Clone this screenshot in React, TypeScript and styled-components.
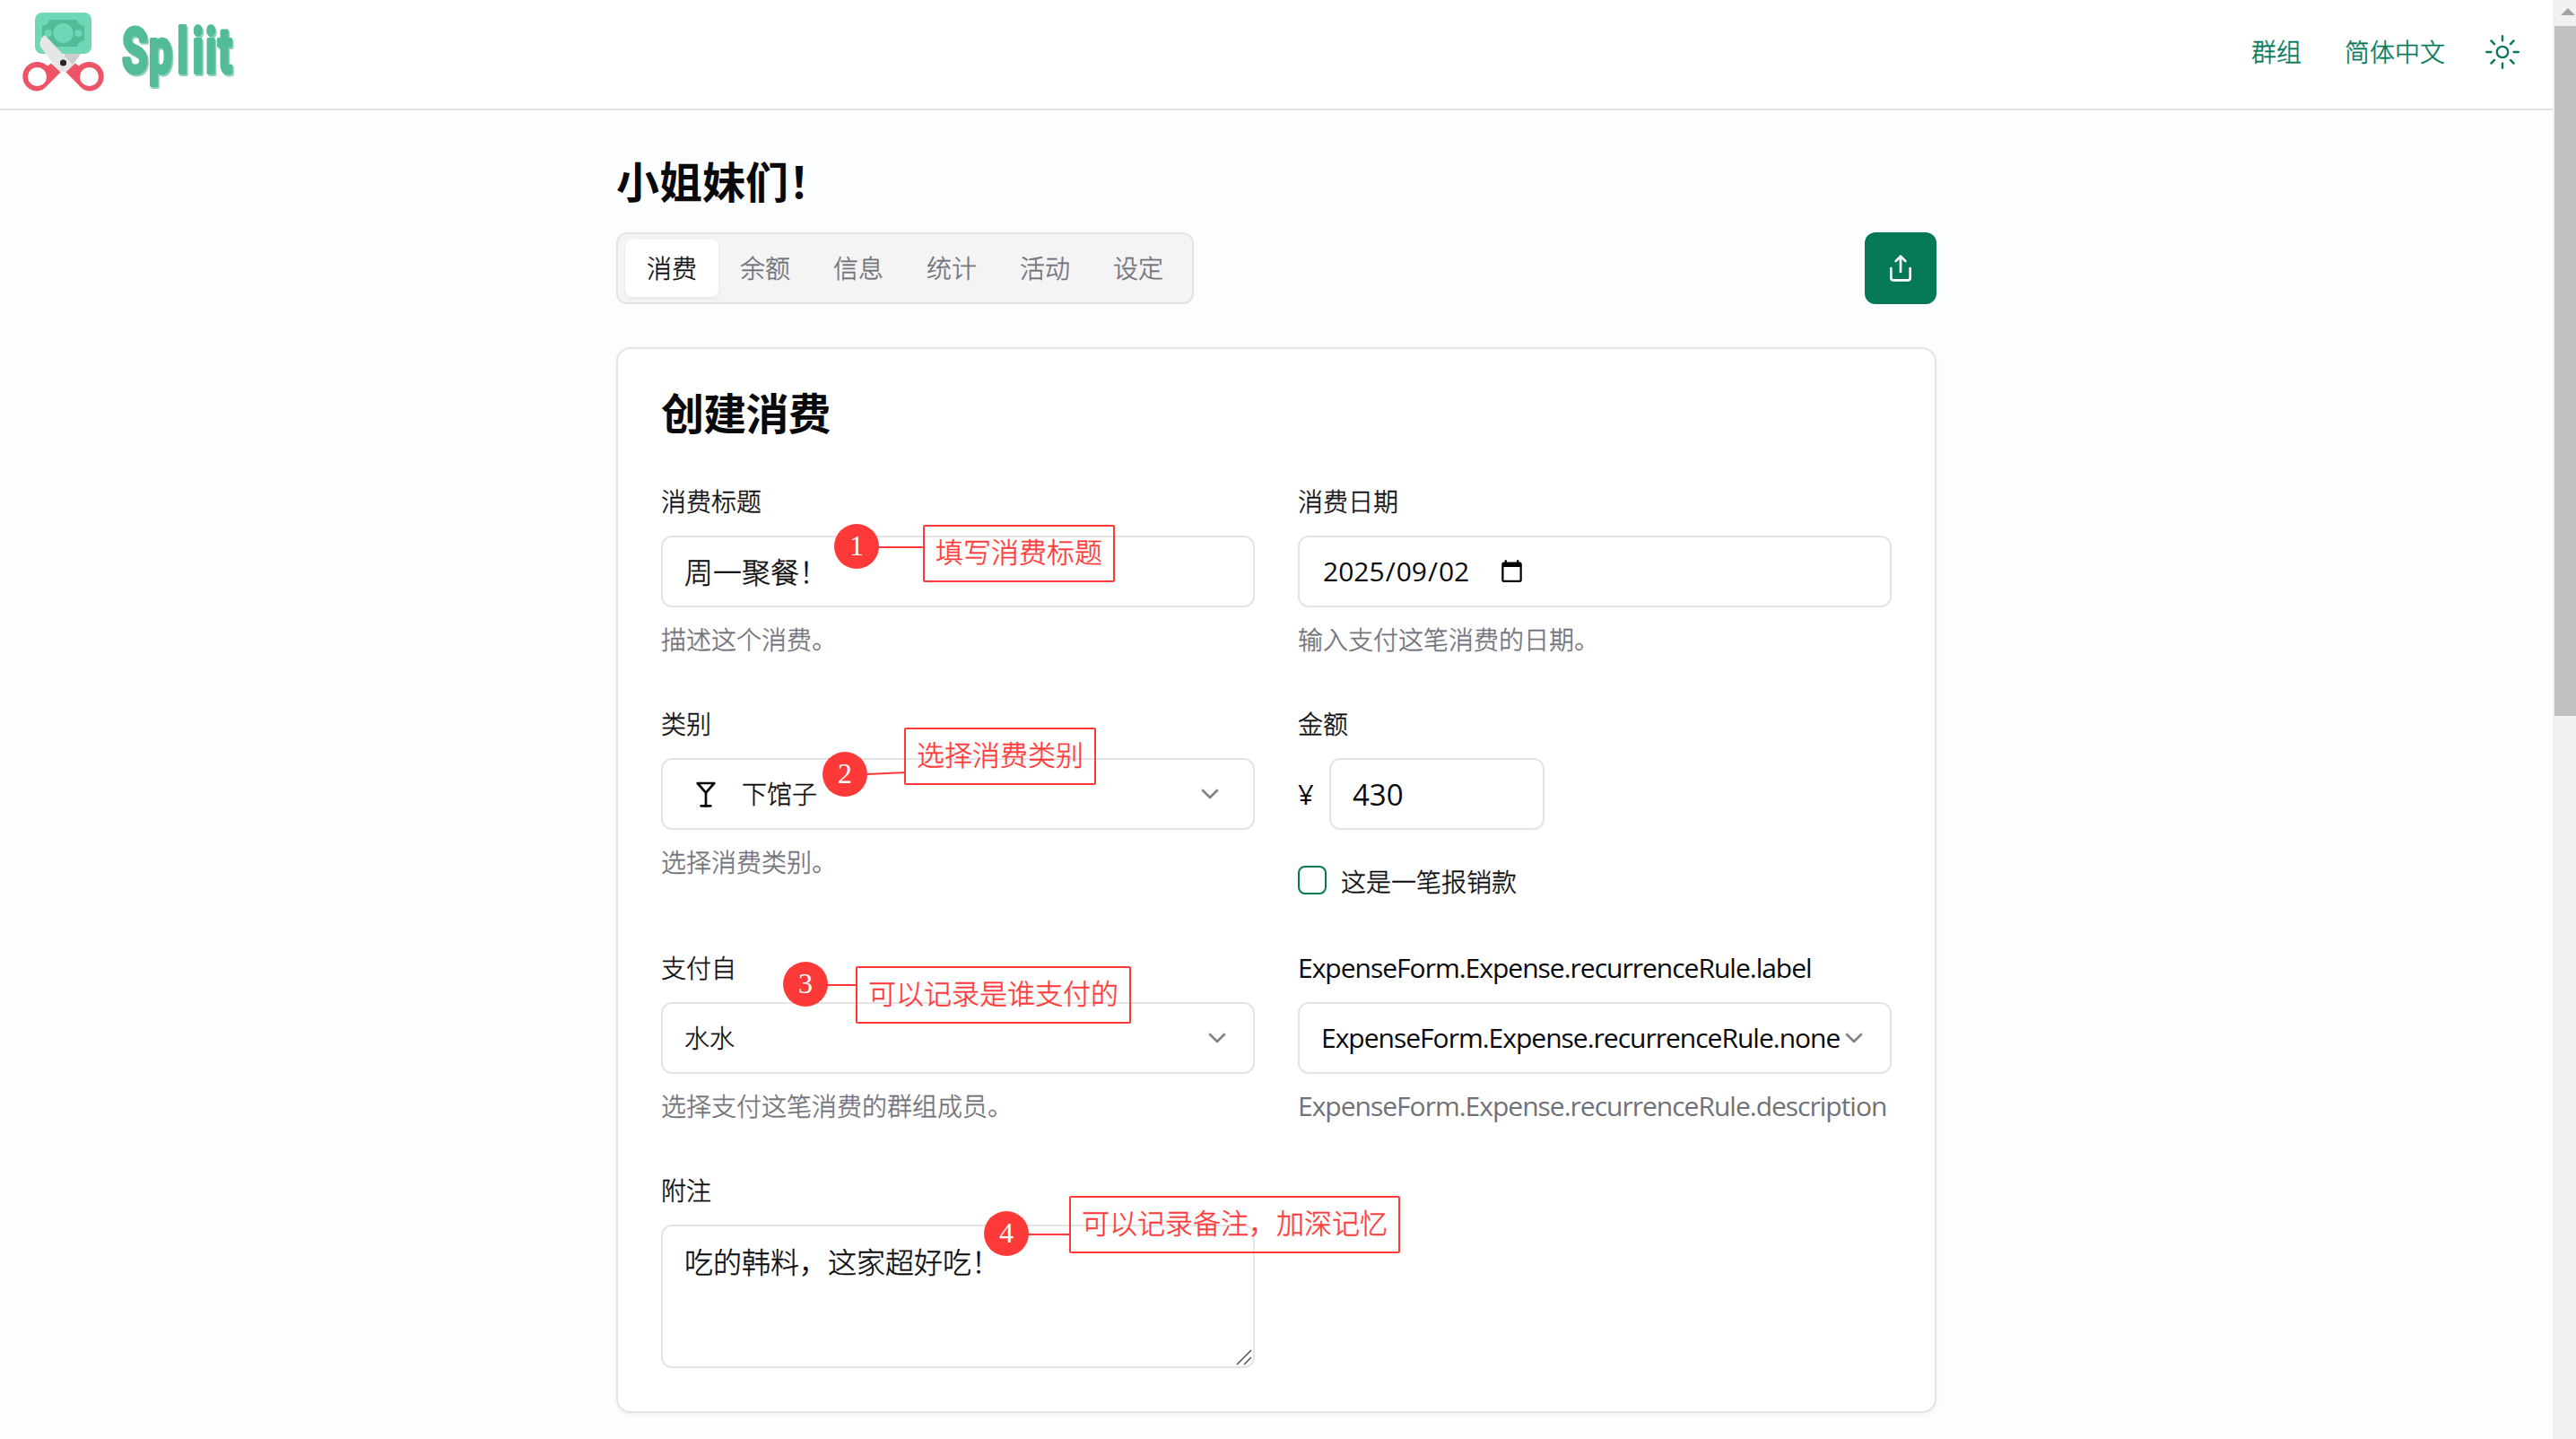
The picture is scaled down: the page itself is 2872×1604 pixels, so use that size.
import React from "react";
import styled, { createGlobalStyle } from "styled-components";
import { ChevronDown, Martini } from "lucide-react";

const green = "#047857";
const line = "#e4e4e7";
const muted = "#71717a";
const ink = "#09090b";
const red = "#ff3838";

const GlobalStyle = createGlobalStyle`
  * { box-sizing: border-box; }
  html, body { margin: 0; padding: 0; }
  body {
    font-family: "Noto Sans", "Noto Sans CJK SC", sans-serif;
    font-weight: 300;
    -webkit-text-stroke: 0.4px currentColor;
    color: ${ink};
    background: #fcfdff;
    overflow: hidden;
  }
`;

const Shell = styled.div`
  display: flex;
  width: 2872px;
  height: 1604px;
  overflow: hidden;
`;

const Page = styled.div`
  flex: 1;
  display: flex;
  flex-direction: column;
`;

const Header = styled.header`
  display: flex;
  justify-content: space-between;
  height: 123px;
  flex: none;
  background: #fff;
  border-bottom: 2px solid ${line};
`;

const Nav = styled.nav`
  display: flex;
  align-items: center;
  gap: 48px;
  height: 116px;
  padding-right: 37px;
  color: ${green};
  font-size: 28px;
  line-height: 40px;
`;

const SunSvg = styled.svg`
  width: 38px;
  height: 38px;
  margin-left: -3px;
  fill: none;
  stroke: ${green};
  stroke-linecap: round;
`;

const Main = styled.main`
  width: 1472px;
  margin: 0 auto;
  padding-top: 48px;
  display: flex;
  flex-direction: column;
`;

const GroupTitle = styled.h1`
  margin: 0;
  height: 64px;
  font-size: 48px;
  line-height: 64px;
  font-weight: 700;
  -webkit-text-stroke: 0;
`;

const TabBar = styled.div`
  display: flex;
  justify-content: space-between;
  margin-top: 24px;
`;

const Tabs = styled.div`
  display: flex;
  align-items: center;
  height: 80px;
  padding: 0 8px;
  border: 2px solid ${line};
  border-radius: 12px;
  background: #f4f4f5;
`;

const Tab = styled.div<{ $active?: boolean }>`
  height: 64px;
  padding: 0 24px;
  border-radius: 8px;
  font-size: 28px;
  line-height: 64px;
  color: ${(p) => (p.$active ? ink : muted)};
  background: ${(p) => (p.$active ? "#fff" : "transparent")};
  box-shadow: ${(p) => (p.$active ? "0 2px 4px rgba(0,0,0,0.06)" : "none")};
`;

const ShareButton = styled.button`
  display: flex;
  align-items: center;
  justify-content: center;
  width: 80px;
  height: 80px;
  padding: 0;
  border: 0;
  border-radius: 12px;
  background: ${green};
`;

const ShareSvg = styled.svg`
  width: 32px;
  height: 32px;
  fill: none;
  stroke: #fff;
  stroke-width: 2;
  stroke-linecap: round;
  stroke-linejoin: round;
`;

const Card = styled.section`
  position: relative;
  height: 1188px;
  margin-top: 48px;
  padding: 40px 48px 48px;
  border: 2px solid ${line};
  border-radius: 16px;
  background: #fff;
  box-shadow: 0 2px 4px rgba(0, 0, 0, 0.05);
`;

const CardTitle = styled.h2`
  margin: 0 0 46px;
  height: 64px;
  font-size: 48px;
  line-height: 64px;
  font-weight: 700;
  letter-spacing: -0.8px;
  -webkit-text-stroke: 0;
`;

const FormGrid = styled.div`
  display: grid;
  grid-template-columns: 662px 662px;
  grid-template-rows: 196px 220px 196px 218px;
  gap: 52px 48px;
`;

const Field = styled.div`
  display: flex;
  flex-direction: column;
`;

const Label = styled.label`
  height: 40px;
  margin-bottom: 18px;
  font-size: 28px;
  line-height: 40px;
  white-space: nowrap;
`;

const Hint = styled.p`
  height: 40px;
  margin: 16px 0 0;
  font-size: 28px;
  line-height: 40px;
  color: ${muted};
  white-space: nowrap;
`;

const Latin = styled.span`
  display: block;
  font-family: "Open Sans", "Noto Sans", sans-serif;
  font-weight: 400;
  font-size: 30px;
  letter-spacing: -1px;
  -webkit-text-stroke: 0;
`;

const Control = styled.div<{ $inset?: number; $width?: string }>`
  display: flex;
  align-items: center;
  width: ${(p) => p.$width ?? "100%"};
  height: 80px;
  padding: 0 ${(p) => p.$inset ?? 24}px;
  border: 2px solid ${line};
  border-radius: 12px;
  font-size: 28px;
  line-height: 48px;
  white-space: nowrap;
`;

const TextValue = styled.span`
  padding-top: 2px;
  font-size: 32px;
`;

const Chevron = styled(ChevronDown)`
  flex: none;
  margin-left: auto;
  opacity: 0.5;
`;

const Category = styled.span`
  display: flex;
  align-items: center;
  gap: 24px;
`;

const DateValue = styled(Latin)`
  display: flex;
  gap: 1px;
  padding-left: 2px;
  letter-spacing: 0;
`;

const CalendarSvg = styled.svg`
  width: 27px;
  height: 27px;
  margin-left: 34px;
  margin-bottom: 2px;
`;

const Amount = styled(Latin)`
  padding-top: 1px;
  font-size: 33px;
  letter-spacing: 0;
`;

const Currency = styled(Latin)`
  width: 19px;
  font-size: 31px;
  letter-spacing: 0;
`;

const AmountRow = styled.div`
  display: flex;
  align-items: center;
  gap: 16px;
  line-height: 48px;
`;

const CheckRow = styled.div`
  display: flex;
  gap: 16px;
  margin-top: 38px;
  font-size: 28px;
  line-height: 40px;
`;

const Checkbox = styled.span`
  width: 32px;
  height: 32px;
  margin-top: 2px;
  border: 2px solid ${green};
  border-radius: 8px;
`;

const NoteBox = styled.div`
  display: flex;
  justify-content: space-between;
  height: 160px;
  padding: 16px 1px 1px 24px;
  border: 2px solid ${line};
  border-radius: 12px;
  font-size: 32px;
  line-height: 48px;
`;

const GripSvg = styled.svg`
  align-self: flex-end;
  width: 18px;
  height: 18px;
  stroke: #555;
  stroke-width: 1.6;
`;

const Callouts = styled.div`
  position: absolute;
  left: -689px;
  top: -389px;
  color: ${red};
`;

const Badge = styled.div<{ $x: number; $y: number }>`
  position: absolute;
  left: ${(p) => p.$x - 25}px;
  top: ${(p) => p.$y - 25}px;
  width: 50px;
  height: 50px;
  border-radius: 50%;
  background: ${red};
  color: #fff;
  text-align: center;
  font-family: "Liberation Serif", serif;
  font-size: 32px;
  font-weight: 400;
  line-height: 49px;
  -webkit-text-stroke: 0;
`;

const Note = styled.div<{ $x: number; $y: number; $w: number }>`
  position: absolute;
  left: ${(p) => p.$x}px;
  top: ${(p) => p.$y}px;
  width: ${(p) => p.$w}px;
  height: 64px;
  padding-left: 12px;
  border: 2px solid ${red};
  border-radius: 2px;
  font-size: 31px;
  line-height: 56px;
  white-space: nowrap;
`;

const Connector = styled.div<{ $x: number; $y: number; $w: number; $tilt?: number }>`
  position: absolute;
  left: ${(p) => p.$x}px;
  top: ${(p) => p.$y}px;
  width: ${(p) => p.$w}px;
  height: 2px;
  background: ${red};
  transform: rotate(${(p) => p.$tilt ?? 0}deg);
`;

const Scrollbar = styled.div`
  display: flex;
  flex-direction: column;
  width: 26px;
  background: #f1f1f1;
`;

const ScrollArrow = styled.svg`
  width: 26px;
  height: 29px;
  fill: #a3a3a3;
`;

const Thumb = styled.div`
  height: 769px;
  margin-left: 2px;
  background: #c1c1c1;
`;

const LogoSvg = styled.svg`
  width: 280px;
  height: 116px;
  font-family: Roboto, sans-serif;
  font-weight: 700;
  font-size: 71px;
  stroke-linejoin: round;
`;

const letterX = "0 45 93 119 141 162";

function Logo() {
  return (
    <LogoSvg viewBox="0 0 280 116">
      <rect x="39" y="14" width="63" height="46" rx="8" fill="#6fd6b7" />
      <path d="M55 22H86Q87 28 94 29V45Q87 46 86 52H55Q54 46 47 45V29Q54 28 55 22Z" fill="#54bb99" />
      <circle cx="70.5" cy="37" r="11" fill="#6fd6b7" />
      <circle cx="53.5" cy="37" r="4" fill="#6fd6b7" />
      <circle cx="87.5" cy="37" r="4" fill="#6fd6b7" />
      <path d="M72 60H90L76 80L67 73Z" fill="#cccccc" />
      <path d="M50 39Q43 43 45 52L66 80L76 80L81 72Z" fill="#e6e6e6" />
      <path
        d="M41.500 69C47 69 51 71.500 53 73.500L57 70.500L67.500 80.500L54 94Q48 101.500 41.500 101.500A16.250 16.250 0 0 1 41.500 69ZM41.500 75A10.500 10.500 0 1 0 41.500 96A10.500 10.500 0 1 0 41.500 75Z"
        fill="#ee5468"
        fillRule="evenodd"
      />
      <path
        d="M99.500 69C94 69 90 71.500 88 73.500L84 70.500L73.500 80.500L87 94Q93 101.500 99.500 101.500A16.250 16.250 0 0 0 99.500 69ZM99.500 75A10.500 10.500 0 1 0 99.500 96A10.500 10.500 0 1 0 99.500 75Z"
        fill="#ee5468"
        fillRule="evenodd"
      />
      <circle cx="70.500" cy="70" r="3.600" fill="#2d2226" />
      <g transform="translate(137.500 82.500) scale(.66 1)">
        <text x={letterX} y="0" fill="#8bd3bf" stroke="#8bd3bf" strokeWidth="4">Spliit</text>
      </g>
      <g transform="translate(136 81) scale(.66 1)">
        <text x={letterX} y="0" fill="#54bb99" stroke="#54bb99" strokeWidth="4">Spliit</text>
      </g>
    </LogoSvg>
  );
}

function Sun() {
  return (
    <SunSvg viewBox="0 0 15 15">
      <circle cx="7.5" cy="7.5" r="2.45" strokeWidth=".9" />
      <path
        strokeWidth=".95"
        d="M7.5.5v2M7.5 12.500v2M.5 7.500h2M12.500 7.500h2M2.550 2.550l1.410 1.410M11.040 11.040l1.410 1.410M12.450 2.550l-1.410 1.410M3.960 11.040l-1.410 1.410"
      />
    </SunSvg>
  );
}

const tabs = ["消费", "余额", "信息", "统计", "活动", "设定"];

export default function App() {
  return (
    <Shell lang="zh-CN">
      <GlobalStyle />
      <Page>
        <Header>
          <Logo />
          <Nav>
            <span>群组</span>
            <span>简体中文</span>
            <Sun />
          </Nav>
        </Header>
        <Main>
          <GroupTitle>小姐妹们！</GroupTitle>
          <TabBar>
            <Tabs>
              {tabs.map((name, i) => (
                <Tab key={name} $active={i === 0}>{name}</Tab>
              ))}
            </Tabs>
            <ShareButton aria-label="share">
              <ShareSvg viewBox="0 0 24 24">
                <path d="M4 12v8a2 2 0 0 0 2 2h12a2 2 0 0 0 2-2v-8M16 6l-4-4-4 4M12 2v13" />
              </ShareSvg>
            </ShareButton>
          </TabBar>
          <Card>
            <CardTitle>创建消费</CardTitle>
            <FormGrid>
              <Field>
                <Label>消费标题</Label>
                <Control><TextValue>周一聚餐！</TextValue></Control>
                <Hint>描述这个消费。</Hint>
              </Field>
              <Field>
                <Label>消费日期</Label>
                <Control>
                  <DateValue>
                    <span>2025</span><span>/</span><span>09</span><span>/</span><span>02</span>
                  </DateValue>
                  <CalendarSvg viewBox="0 0 24 24">
                    <path d="M20 3h-1V1h-2v2H7V1H5v2H4c-1.100 0-2 .9-2 2v16c0 1.100.9 2 2 2h16c1.100 0 2-.9 2-2V5c0-1.100-.9-2-2-2zm0 18H4V8h16v13z" />
                  </CalendarSvg>
                </Control>
                <Hint>输入支付这笔消费的日期。</Hint>
              </Field>
              <Field>
                <Label>类别</Label>
                <Control $inset={32}>
                  <Category>
                    <Martini size={32} />
                    下馆子
                  </Category>
                  <Chevron size={32} />
                </Control>
                <Hint>选择消费类别。</Hint>
              </Field>
              <Field>
                <Label>金额</Label>
                <AmountRow>
                  <Currency>¥</Currency>
                  <Control $width="240px"><Amount>430</Amount></Control>
                </AmountRow>
                <CheckRow>
                  <Checkbox />
                  <span>这是一笔报销款</span>
                </CheckRow>
              </Field>
              <Field>
                <Label>支付自</Label>
                <Control>
                  水水
                  <Chevron size={32} />
                </Control>
                <Hint>选择支付这笔消费的群组成员。</Hint>
              </Field>
              <Field>
                <Label><Latin>ExpenseForm.Expense.recurrenceRule.label</Latin></Label>
                <Control>
                  <Latin>ExpenseForm.Expense.recurrenceRule.none</Latin>
                  <Chevron size={32} />
                </Control>
                <Hint><Latin>ExpenseForm.Expense.recurrenceRule.description</Latin></Hint>
              </Field>
              <Field>
                <Label>附注</Label>
                <NoteBox>
                  吃的韩料，这家超好吃！
                  <GripSvg viewBox="0 0 18 18">
                    <path d="M1 17L17 1M9 17L17 9" />
                  </GripSvg>
                </NoteBox>
              </Field>
            </FormGrid>
            <Callouts>
              <Connector $x={978} $y={609} $w={52} />
              <Badge $x={955} $y={609}>1</Badge>
              <Note $x={1029} $y={585} $w={214}>填写消费标题</Note>
              <Connector $x={966} $y={861} $w={44} $tilt={-2.5} />
              <Badge $x={942} $y={863}>2</Badge>
              <Note $x={1008} $y={811} $w={214}>选择消费类别</Note>
              <Connector $x={922} $y={1097} $w={34} />
              <Badge $x={898} $y={1097}>3</Badge>
              <Note $x={954} $y={1077} $w={307}>可以记录是谁支付的</Note>
              <Connector $x={1146} $y={1375} $w={48} />
              <Badge $x={1122} $y={1375}>4</Badge>
              <Note $x={1192} $y={1333} $w={369}>可以记录备注，加深记忆</Note>
            </Callouts>
          </Card>
        </Main>
      </Page>
      <Scrollbar>
        <ScrollArrow viewBox="0 0 26 29">
          <path d="M9 17L17 9L25 17Z" />
        </ScrollArrow>
        <Thumb />
      </Scrollbar>
    </Shell>
  );
}
